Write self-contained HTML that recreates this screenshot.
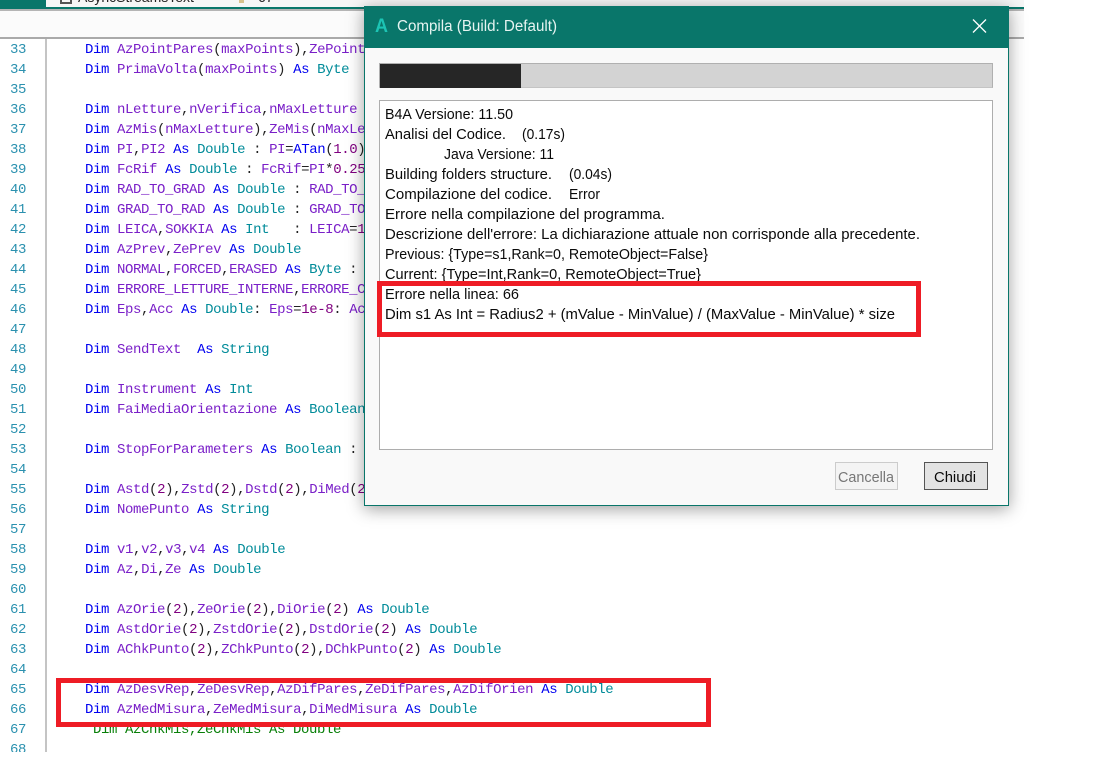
<!DOCTYPE html>
<html><head><meta charset="utf-8"><style>
html,body{margin:0;padding:0;width:1114px;height:772px;background:#fff;overflow:hidden}
#a{position:absolute;left:0;top:0;width:1114px;height:772px;overflow:hidden;background:#fff}
.abs{position:absolute}
#code{position:absolute;left:0;top:39px;width:1024px;height:713px;overflow:hidden;background:#fff;font:14px/20px "Liberation Mono",monospace;letter-spacing:-.4px;color:#222}
.l{position:absolute;left:0;height:20px;white-space:pre;width:1024px;margin-top:1px}
.l i{position:absolute;left:0;width:26px;text-align:right;font-style:normal;color:#2b91af}
.l b{position:absolute;left:85px;font-weight:normal;white-space:pre}
.k{color:#0000f0}.v{color:#7a1fc8}.t{color:#008b99}.n{color:#800080}.g{color:#087f08}
.red{position:absolute;border:5px solid #ee1c25;box-sizing:border-box}
</style></head><body><div id="a">
<div class="abs" style="left:0;top:0;width:1024px;height:10px;background:#f6f6f6"></div>
<div class="abs" style="left:0;top:0;width:46px;height:7px;background:#09766a"></div>
<div class="abs" style="left:60px;top:0;width:12px;height:4px;border:2px solid #555;border-top:0;box-sizing:border-box"></div>
<div class="abs" style="left:78px;top:-11px;font:14px 'Liberation Sans',sans-serif;color:#222;white-space:nowrap">AsyncStreamsText</div>
<div class="abs" style="left:239px;top:0;width:5px;height:3px;background:#d8c28c"></div>
<div class="abs" style="left:258px;top:-11px;font:14px 'Liberation Sans',sans-serif;color:#222">67</div>
<div class="abs" style="left:0;top:7px;width:1024px;height:2px;background:#09766a"></div>
<div class="abs" style="left:0;top:9px;width:1024px;height:2px;background:#b5b5b5"></div>
<div class="abs" style="left:0;top:11px;width:1024px;height:26px;background:#fbfbfb"></div>
<div class="abs" style="left:0;top:37px;width:1024px;height:2px;background:#aaa"></div>
<div id="code">
<div class="abs" style="left:45px;top:0;width:2px;height:713px;background:#c4c4c4"></div>
<div class="l" style="top:0"><i>33</i><b><span class="k">Dim</span> <span class="v">AzPointPares</span>(<span class="v">maxPoints</span>),<span class="v">ZePointPares</span></b></div>
<div class="l" style="top:20px"><i>34</i><b><span class="k">Dim</span> <span class="v">PrimaVolta</span>(<span class="v">maxPoints</span>) <span class="k">As</span> <span class="t">Byte</span></b></div>
<div class="l" style="top:40px"><i>35</i></div>
<div class="l" style="top:60px"><i>36</i><b><span class="k">Dim</span> <span class="v">nLetture</span>,<span class="v">nVerifica</span>,<span class="v">nMaxLetture</span></b></div>
<div class="l" style="top:80px"><i>37</i><b><span class="k">Dim</span> <span class="v">AzMis</span>(<span class="v">nMaxLetture</span>),<span class="v">ZeMis</span>(<span class="v">nMaxLetture</span>)</b></div>
<div class="l" style="top:100px"><i>38</i><b><span class="k">Dim</span> <span class="v">PI</span>,<span class="v">PI2</span> <span class="k">As</span> <span class="t">Double</span> : <span class="v">PI</span>=<span class="k">ATan</span>(<span class="n">1.0</span>)</b></div>
<div class="l" style="top:120px"><i>39</i><b><span class="k">Dim</span> <span class="v">FcRif</span> <span class="k">As</span> <span class="t">Double</span> : <span class="v">FcRif</span>=<span class="v">PI</span>*<span class="n">0.25</span></b></div>
<div class="l" style="top:140px"><i>40</i><b><span class="k">Dim</span> <span class="v">RAD_TO_GRAD</span> <span class="k">As</span> <span class="t">Double</span> : <span class="v">RAD_TO_GRAD</span></b></div>
<div class="l" style="top:160px"><i>41</i><b><span class="k">Dim</span> <span class="v">GRAD_TO_RAD</span> <span class="k">As</span> <span class="t">Double</span> : <span class="v">GRAD_TO_RAD</span></b></div>
<div class="l" style="top:180px"><i>42</i><b><span class="k">Dim</span> <span class="v">LEICA</span>,<span class="v">SOKKIA</span> <span class="k">As</span> <span class="t">Int</span>   : <span class="v">LEICA</span>=<span class="n">1</span></b></div>
<div class="l" style="top:200px"><i>43</i><b><span class="k">Dim</span> <span class="v">AzPrev</span>,<span class="v">ZePrev</span> <span class="k">As</span> <span class="t">Double</span></b></div>
<div class="l" style="top:220px"><i>44</i><b><span class="k">Dim</span> <span class="v">NORMAL</span>,<span class="v">FORCED</span>,<span class="v">ERASED</span> <span class="k">As</span> <span class="t">Byte</span> :</b></div>
<div class="l" style="top:240px"><i>45</i><b><span class="k">Dim</span> <span class="v">ERRORE_LETTURE_INTERNE</span>,<span class="v">ERRORE_COLLIMAZIONE</span></b></div>
<div class="l" style="top:260px"><i>46</i><b><span class="k">Dim</span> <span class="v">Eps</span>,<span class="v">Acc</span> <span class="k">As</span> <span class="t">Double</span>: <span class="v">Eps</span>=<span class="n">1e-8</span>: <span class="v">Acc</span></b></div>
<div class="l" style="top:280px"><i>47</i></div>
<div class="l" style="top:300px"><i>48</i><b><span class="k">Dim</span> <span class="v">SendText</span>  <span class="k">As</span> <span class="t">String</span></b></div>
<div class="l" style="top:320px"><i>49</i></div>
<div class="l" style="top:340px"><i>50</i><b><span class="k">Dim</span> <span class="v">Instrument</span> <span class="k">As</span> <span class="t">Int</span></b></div>
<div class="l" style="top:360px"><i>51</i><b><span class="k">Dim</span> <span class="v">FaiMediaOrientazione</span> <span class="k">As</span> <span class="t">Boolean</span></b></div>
<div class="l" style="top:380px"><i>52</i></div>
<div class="l" style="top:400px"><i>53</i><b><span class="k">Dim</span> <span class="v">StopForParameters</span> <span class="k">As</span> <span class="t">Boolean</span> :</b></div>
<div class="l" style="top:420px"><i>54</i></div>
<div class="l" style="top:440px"><i>55</i><b><span class="k">Dim</span> <span class="v">Astd</span>(<span class="n">2</span>),<span class="v">Zstd</span>(<span class="n">2</span>),<span class="v">Dstd</span>(<span class="n">2</span>),<span class="v">DiMed</span>(<span class="n">2</span>)</b></div>
<div class="l" style="top:460px"><i>56</i><b><span class="k">Dim</span> <span class="v">NomePunto</span> <span class="k">As</span> <span class="t">String</span></b></div>
<div class="l" style="top:480px"><i>57</i></div>
<div class="l" style="top:500px"><i>58</i><b><span class="k">Dim</span> <span class="v">v1</span>,<span class="v">v2</span>,<span class="v">v3</span>,<span class="v">v4</span> <span class="k">As</span> <span class="t">Double</span></b></div>
<div class="l" style="top:520px"><i>59</i><b><span class="k">Dim</span> <span class="v">Az</span>,<span class="v">Di</span>,<span class="v">Ze</span> <span class="k">As</span> <span class="t">Double</span></b></div>
<div class="l" style="top:540px"><i>60</i></div>
<div class="l" style="top:560px"><i>61</i><b><span class="k">Dim</span> <span class="v">AzOrie</span>(<span class="n">2</span>),<span class="v">ZeOrie</span>(<span class="n">2</span>),<span class="v">DiOrie</span>(<span class="n">2</span>) <span class="k">As</span> <span class="t">Double</span></b></div>
<div class="l" style="top:580px"><i>62</i><b><span class="k">Dim</span> <span class="v">AstdOrie</span>(<span class="n">2</span>),<span class="v">ZstdOrie</span>(<span class="n">2</span>),<span class="v">DstdOrie</span>(<span class="n">2</span>) <span class="k">As</span> <span class="t">Double</span></b></div>
<div class="l" style="top:600px"><i>63</i><b><span class="k">Dim</span> <span class="v">AChkPunto</span>(<span class="n">2</span>),<span class="v">ZChkPunto</span>(<span class="n">2</span>),<span class="v">DChkPunto</span>(<span class="n">2</span>) <span class="k">As</span> <span class="t">Double</span></b></div>
<div class="l" style="top:620px"><i>64</i></div>
<div class="l" style="top:640px"><i>65</i><b><span class="k">Dim</span> <span class="v">AzDesvRep</span>,<span class="v">ZeDesvRep</span>,<span class="v">AzDifPares</span>,<span class="v">ZeDifPares</span>,<span class="v">AzDifOrien</span> <span class="k">As</span> <span class="t">Double</span></b></div>
<div class="l" style="top:660px"><i>66</i><b><span class="k">Dim</span> <span class="v">AzMedMisura</span>,<span class="v">ZeMedMisura</span>,<span class="v">DiMedMisura</span> <span class="k">As</span> <span class="t">Double</span></b></div>
<div class="l" style="top:680px"><i>67</i><b style="left:93px" class="g">Dim AzChkMis,ZeChkMis As Double</b></div>
<div class="l" style="top:700px"><i>68</i></div>
</div>
<div class="red" style="left:56px;top:678px;width:655px;height:49px"></div>

<div class="abs" style="left:364px;top:6px;width:645px;height:500px;background:#f9f9f9;box-shadow:0 3px 16px rgba(0,0,0,.38);border:1px solid #09766a;border-top:0;box-sizing:border-box"></div>
<div class="abs" style="left:364px;top:6px;width:645px;height:42px;background:#09766a"></div>
<div class="abs" style="left:379px;top:63px;width:614px;height:25px;background:#d3d3d3;border:1px solid #b0b0b0;border-bottom-color:#c4c4c4;box-sizing:border-box"></div>
<div class="abs" style="left:380px;top:64px;width:141px;height:24px;background:#262626"></div>
<div class="abs" style="left:379px;top:100px;width:614px;height:350px;background:#fff;border:1px solid #adadad;box-sizing:border-box"></div>
<div class="abs" style="left:835px;top:462px;width:63px;height:28px;background:#f4f4f4;border:1px solid #ccc;box-sizing:border-box"></div>
<div class="abs" style="left:924px;top:462px;width:64px;height:28px;background:#e3e3e3;border:1px solid #555;box-sizing:border-box"></div>
<svg class="abs" style="left:0;top:0" width="1114" height="772" xmlns="http://www.w3.org/2000/svg">
<g font-family="Liberation Sans, sans-serif" font-size="15" fill="#0a0a0a">
<text x="385" y="119" textLength="128" lengthAdjust="spacingAndGlyphs">B4A Versione: 11.50</text>
<text x="385" y="139" textLength="121" lengthAdjust="spacingAndGlyphs">Analisi del Codice.</text>
<text x="522" y="139" textLength="43" lengthAdjust="spacingAndGlyphs">(0.17s)</text>
<text x="444" y="159" textLength="110" lengthAdjust="spacingAndGlyphs">Java Versione: 11</text>
<text x="385" y="179" textLength="167" lengthAdjust="spacingAndGlyphs">Building folders structure.</text>
<text x="569" y="179" textLength="43" lengthAdjust="spacingAndGlyphs">(0.04s)</text>
<text x="385" y="199" textLength="167" lengthAdjust="spacingAndGlyphs">Compilazione del codice.</text>
<text x="569" y="199" textLength="31" lengthAdjust="spacingAndGlyphs">Error</text>
<text x="385" y="219" textLength="280" lengthAdjust="spacingAndGlyphs">Errore nella compilazione del programma.</text>
<text x="385" y="239" textLength="535" lengthAdjust="spacingAndGlyphs">Descrizione dell'errore: La dichiarazione attuale non corrisponde alla precedente.</text>
<text x="385" y="259" textLength="323" lengthAdjust="spacingAndGlyphs">Previous: {Type=s1,Rank=0, RemoteObject=False}</text>
<text x="385" y="279" textLength="316" lengthAdjust="spacingAndGlyphs">Current: {Type=Int,Rank=0, RemoteObject=True}</text>
<text x="385" y="299" textLength="134" lengthAdjust="spacingAndGlyphs">Errore nella linea: 66</text>
<text x="385" y="319" textLength="510" lengthAdjust="spacingAndGlyphs">Dim s1 As Int = Radius2 + (mValue - MinValue) / (MaxValue - MinValue) * size</text>
<text x="838" y="482" textLength="56" lengthAdjust="spacingAndGlyphs" fill="#777">Cancella</text>
<text x="934" y="482" textLength="42" lengthAdjust="spacingAndGlyphs">Chiudi</text>
</g>
<text x="397" y="31" font-family="Liberation Sans, sans-serif" font-size="15.5" fill="#e6f4f1" textLength="160" lengthAdjust="spacingAndGlyphs">Compila (Build: Default)</text>
<text x="375" y="32" font-family="Liberation Sans, sans-serif" font-size="19" font-weight="bold" fill="#1cc4b4" textLength="13" lengthAdjust="spacingAndGlyphs">A</text>
<path d="M973 19.5L986 32.5M986 19.5L973 32.5" stroke="#fff" stroke-width="1.3" fill="none"/>
</svg>
<div class="red" style="left:377px;top:281px;width:544px;height:56px"></div>
</div></body></html>
